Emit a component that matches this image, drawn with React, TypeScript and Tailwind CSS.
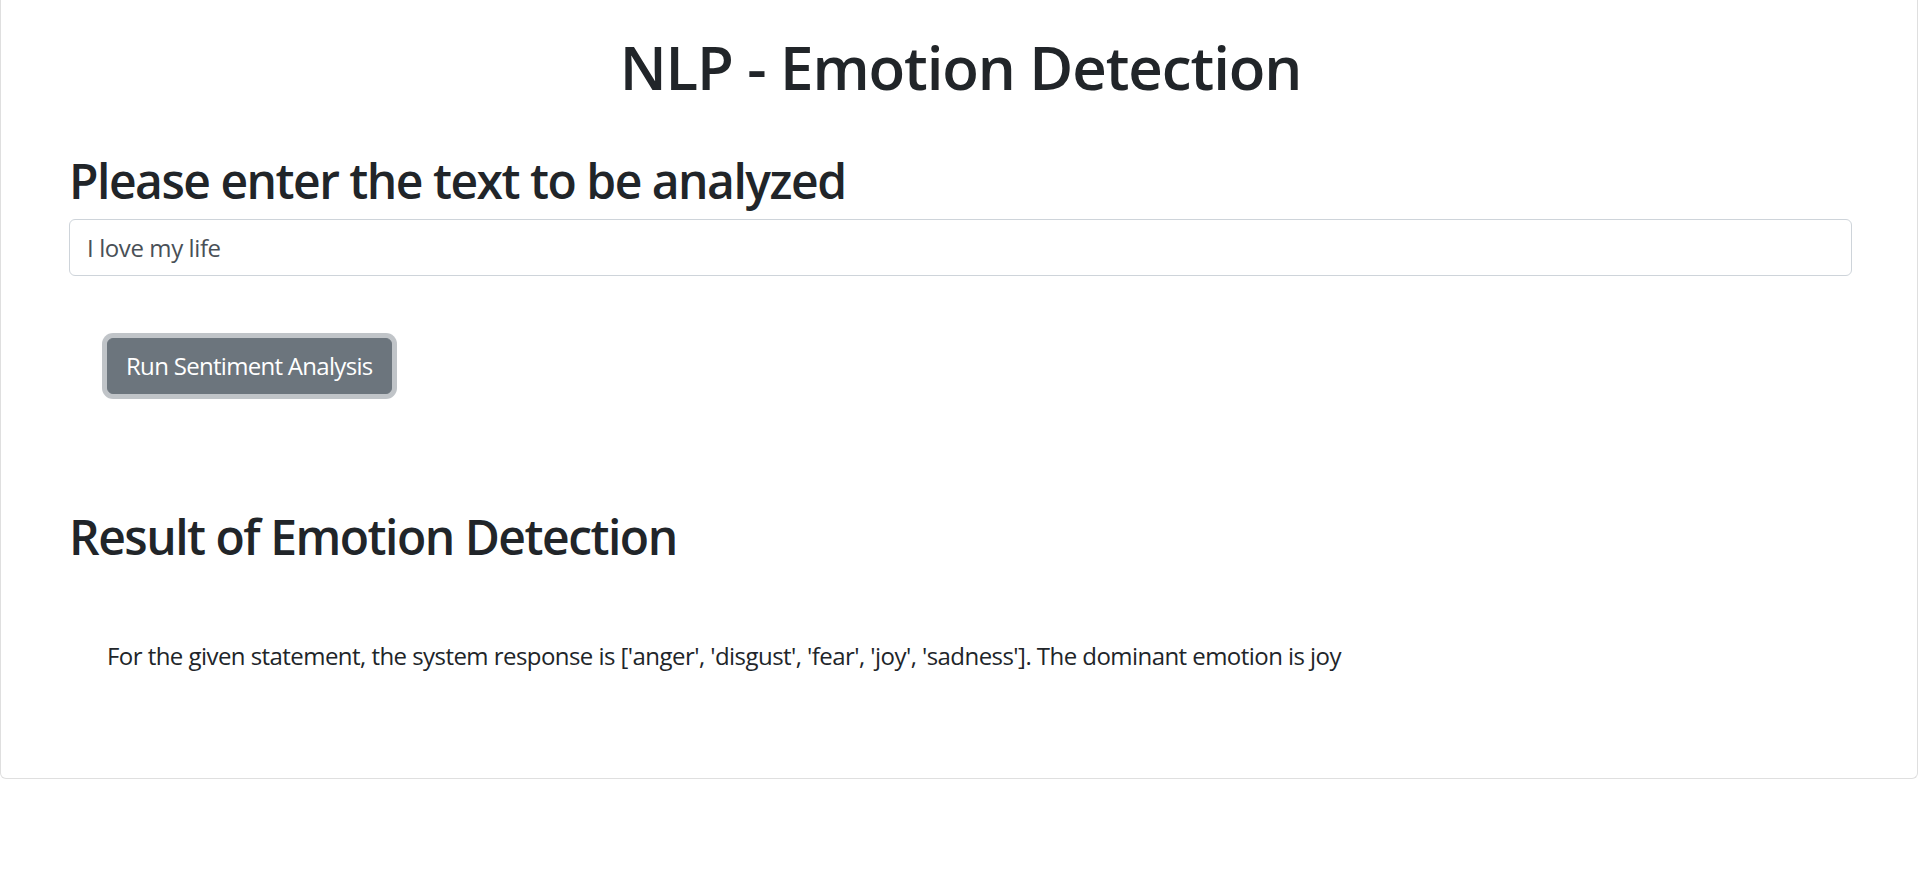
export default function App() {
  return (
    <div className="min-h-screen bg-white font-['Open_Sans',sans-serif] text-[#212529]">
      {/* card, top edge scrolled off */}
      <div className="w-[1918px] border-x border-b border-[#dfdfdf] rounded-b-[6px] pl-[68px] pr-[65px] pt-[31px] pb-[104px]">
        <h1 className="text-center text-[60px] leading-[72px] font-semibold tracking-[-1.1px]">NLP - Emotion Detection</h1>

        <h2 className="mt-[49px] text-[48px] leading-[58px] font-semibold tracking-[-1.5px]">Please enter the text to be analyzed</h2>

        <input
          type="text"
          defaultValue="I love my life"
          className="mt-[9px] block w-full h-[57px] border border-[#ced4da] rounded-[6px] px-[17px] text-[24px] tracking-[-0.4px] text-[#495057] outline-none bg-white"
        />

        <div className="mt-[62px] ml-[38px]">
          <button className="h-[56px] px-[18px] rounded-[6px] bg-[#6c757d] border border-[#6c757d] text-white text-[24px] leading-[36px] tracking-[-0.7px] shadow-[0_0_0_5px_rgba(130,138,145,0.5)]">
            Run Sentiment Analysis
          </button>
        </div>

        <h2 className="mt-[114px] text-[48px] leading-[58px] font-semibold tracking-[-1.5px]">Result of Emotion Detection</h2>

        <p className="mt-[72px] ml-[38px] text-[24px] leading-[36px] tracking-[-0.55px]">
          For the given statement, the system response is ['anger', 'disgust', 'fear', 'joy', 'sadness']. The dominant emotion is joy
        </p>
      </div>
    </div>
  );
}
